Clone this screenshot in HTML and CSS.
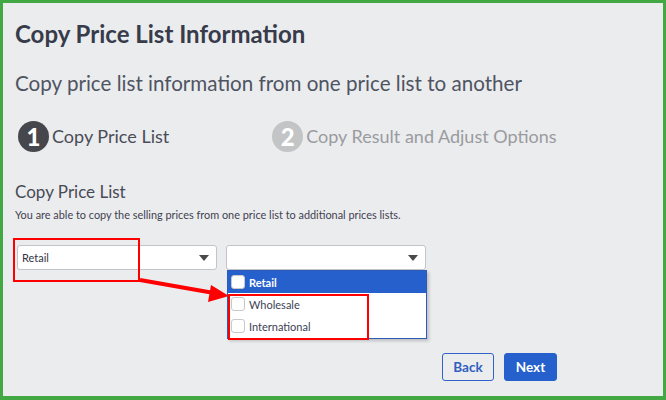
FILE: index.html
```html
<!DOCTYPE html>
<html>
<head>
<meta charset="utf-8">
<link rel="stylesheet" href="styles.css">
</head>
<body>
<div class="frame">
  <h1 class="title">Copy Price List Information</h1>
  <p class="subtitle">Copy price list information from one price list to another</p>
  <div class="steps">
    <div class="step active"><span class="num">1</span><span class="label">Copy Price List</span></div>
    <div class="step inactive"><span class="num">2</span><span class="label">Copy Result and Adjust Options</span></div>
  </div>
  <h2 class="section">Copy Price List</h2>
  <p class="hint">You are able to copy the selling prices from one price list to additional prices lists.</p>
  <div class="selects">
    <div class="select"><span class="value">Retail</span><span class="caret"></span></div>
    <div class="select multi">
      <span class="value"></span><span class="caret"></span>
      <ul class="menu">
        <li class="opt selected"><span class="cb"></span>Retail</li>
        <li class="opt"><span class="cb"></span>Wholesale</li>
        <li class="opt"><span class="cb"></span>International</li>
      </ul>
    </div>
  </div>
  <div class="actions">
    <button class="btn back">Back</button>
    <button class="btn next">Next</button>
  </div>
  <div class="mark mark1"></div>
  <div class="mark mark2"></div>
  <svg class="arrow" width="666" height="400" viewBox="0 0 666 400">
    <line x1="140" y1="280" x2="214" y2="293" stroke="#f00" stroke-width="4"/>
    <polygon points="229,296 211,285 208,302" fill="#f00"/>
  </svg>
</div>
</body>
</html>
```

FILE: styles.css
```css
html, body { margin: 0; padding: 0; }
body { font-family: Lato, "Open Sans", sans-serif; }
.frame {
  position: relative;
  width: 666px;
  height: 400px;
  box-sizing: border-box;
  border: 3px solid #42a843;
  border-bottom-width: 4px;
  background: #ebecee;
  padding: 17px 12px 0 12px;
  color: #3b3f4c;
}
.title {
  margin: 0;
  font-size: 24px;
  font-weight: 700;
  line-height: 28px;
  color: #373b4a;
}
.subtitle {
  margin: 22px 0 0 0;
  font-size: 20.6px;
  line-height: 26px;
  color: #4f5462;
}
.steps {
  display: flex;
  margin-top: 24px;
  padding-left: 3px;
  height: 32px;
  align-items: center;
}
.step { display: flex; align-items: center; }
.step.inactive { margin-left: 103px; }
.num {
  width: 31px;
  height: 31px;
  border-radius: 50%;
  display: flex;
  align-items: center;
  justify-content: center;
  font-size: 24px;
  font-weight: 900;
  color: #fff;
  margin-right: 3px;
}
.active .num { background: #46474c; }
.inactive .num { background: #c3c4c6; }
.label { font-size: 18px; }
.active .label { color: #4a4c57; }
.inactive .label { color: #9a9b9f; }
.section {
  margin: 29px 0 0 0;
  font-size: 17px;
  font-weight: 400;
  line-height: 22px;
  color: #474a55;
}
.hint {
  margin: 5px 0 0 0;
  font-size: 10.9px;
  line-height: 14px;
  color: #3f4250;
}
.selects {
  display: flex;
  gap: 9px;
  margin-top: 23px;
  padding-left: 2px;
}
.select {
  position: relative;
  width: 200px;
  height: 25px;
  box-sizing: border-box;
  background: #fff;
  border: 1px solid #c3c4c9;
  border-radius: 3px;
  display: flex;
  align-items: center;
  padding: 0 6px 0 4px;
}
.value { flex: 1; font-size: 11px; color: #2f3344; }
.caret {
  width: 0; height: 0;
  border-left: 5px solid transparent;
  border-right: 5px solid transparent;
  border-top: 6px solid #4a4a4a;
  margin-right: 1px;
}
.menu {
  position: absolute;
  left: 0;
  top: 24px;
  width: 200px;
  box-sizing: border-box;
  margin: 0;
  padding: 0 0 1px 0;
  list-style: none;
  background: #fff;
  border: 1px solid #2e5bb8;
  box-shadow: 2px 2px 3px rgba(0,0,0,0.2);
  z-index: 2;
}
.opt {
  height: 22px;
  display: flex;
  align-items: center;
  padding-left: 3px;
  font-size: 11px;
  color: #3d4255;
}
.opt.selected { background: #2660cc; color: #fff; font-weight: 700; }
.cb {
  width: 14px;
  height: 14px;
  box-sizing: border-box;
  border: 1px solid #c8c9cc;
  border-radius: 3px;
  background: #fff;
  margin-right: 4px;
}
.actions { display: flex; justify-content: flex-end; gap: 10px; margin-top: 83px; padding-right: 94px; }
.btn {
  height: 28px;
  box-sizing: border-box;
  border-radius: 3px;
  font-family: Lato, sans-serif;
  font-weight: 700;
  font-size: 13.5px;
  padding: 0 10px;
}
.back { width: 52px; background: #ebecee; border: 1px solid #2f63c9; color: #2f5fc0; }
.next { width: 53px; background: #2660cc; border: 1px solid #2660cc; color: #fff; }
.mark { position: absolute; border: 2px solid #f00; box-sizing: border-box; z-index: 3; }
.mark1 { left: 10px; top: 235px; width: 127px; height: 44px; }
.mark2 { left: 225px; top: 291px; width: 141px; height: 46px; }
.arrow { position: absolute; left: -3px; top: -3px; z-index: 4; pointer-events: none; }
```
